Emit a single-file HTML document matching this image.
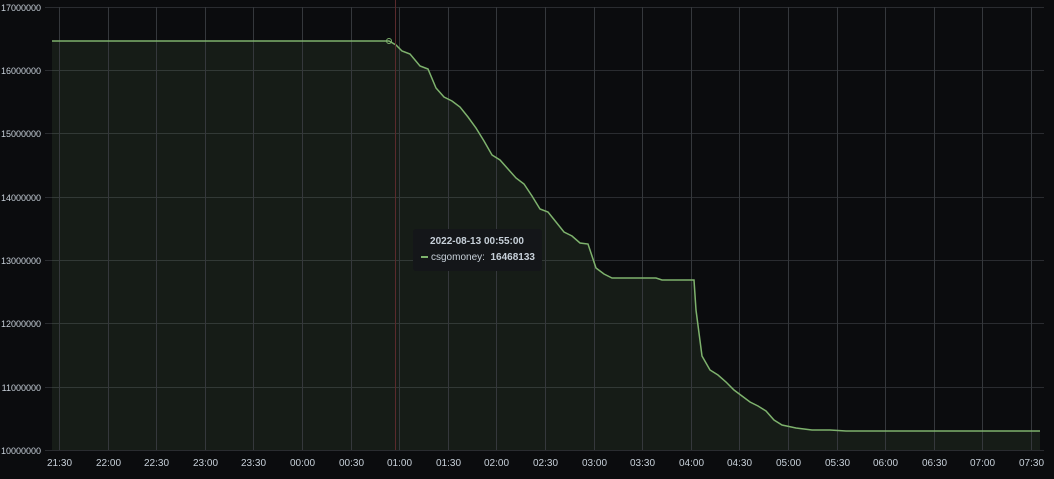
<!DOCTYPE html><html><head><style>
body{margin:0;background:#0b0c0e;width:1054px;height:474px;overflow:hidden;font-family:"Liberation Sans",sans-serif}
svg text{font-family:"Liberation Sans",sans-serif;font-size:10px;fill:#c7d0d9}
svg .yl text{font-size:9px}
</style></head><body>
<svg width="1054" height="474" xmlns="http://www.w3.org/2000/svg">
<g stroke="#2a2c30" stroke-width="1">
<line x1="45" x2="1044" y1="7.5" y2="7.5"/><line x1="45" x2="1044" y1="70.5" y2="70.5"/><line x1="45" x2="1044" y1="133.5" y2="133.5"/><line x1="45" x2="1044" y1="197.5" y2="197.5"/><line x1="45" x2="1044" y1="260.5" y2="260.5"/><line x1="45" x2="1044" y1="323.5" y2="323.5"/><line x1="45" x2="1044" y1="387.5" y2="387.5"/><line x1="45" x2="1044" y1="450.5" y2="450.5"/>
</g>
<path d="M52,41 L389,41 L396,45 L402,51 L410,54 L420,66 L428,69 L436,88 L444,97 L452,101 L460,107 L468,117 L476,128 L484,141 L492,155 L500,160 L508,169 L516,178 L524,184 L532,196 L540,209 L548,212 L556,222 L564,232 L572,236 L580,243 L588,244 L596,268 L604,274 L612,278 L656,278 L662,280 L694,280 L696,310 L702,356 L710,370 L718,375 L726,382 L734,390 L742,396 L750,402 L758,406 L766,411 L774,420 L782,425 L796,428 L812,430 L830,430 L846,431 L1040,431 L1040,450 L52,450 Z" fill="#7eb26d" fill-opacity="0.1"/>
<g id="vg" stroke="#35383c"></g>
<path d="M52,41 L389,41 L396,45 L402,51 L410,54 L420,66 L428,69 L436,88 L444,97 L452,101 L460,107 L468,117 L476,128 L484,141 L492,155 L500,160 L508,169 L516,178 L524,184 L532,196 L540,209 L548,212 L556,222 L564,232 L572,236 L580,243 L588,244 L596,268 L604,274 L612,278 L656,278 L662,280 L694,280 L696,310 L702,356 L710,370 L718,375 L726,382 L734,390 L742,396 L750,402 L758,406 L766,411 L774,420 L782,425 L796,428 L812,430 L830,430 L846,431 L1040,431" fill="none" stroke="#7eb26d" stroke-width="1.5"/>
<line x1="395.5" x2="395.5" y1="0" y2="450" stroke="#5a2a2c" stroke-width="1"/>
<circle cx="389" cy="41" r="2.5" fill="none" stroke="#7eb26d"/>
<g text-anchor="end" class="yl">
<text x="41" y="11">17000000</text><text x="41" y="74">16000000</text><text x="41" y="137">15000000</text><text x="41" y="201">14000000</text><text x="41" y="264">13000000</text><text x="41" y="327">12000000</text><text x="41" y="391">11000000</text><text x="41" y="454">10000000</text>
</g>
<g text-anchor="middle" id="xl"></g>
<rect x="413" y="229" width="129" height="42" rx="3" fill="#141619"/>
<text x="477" y="244" text-anchor="middle" style="font-weight:bold">2022-08-13 00:55:00</text>
<line x1="421" x2="428" y1="257" y2="257" stroke="#7eb26d" stroke-width="2"/>
<text x="431" y="260">csgomoney:</text>
<text x="535" y="260" text-anchor="end" style="font-weight:bold">16468133</text>
</svg>
<script>
var labels=["21:30","22:00","22:30","23:00","23:30","00:00","00:30","01:00","01:30","02:00","02:30","03:00","03:30","04:00","04:30","05:00","05:30","06:00","06:30","07:00","07:30"];
var g=document.getElementById('vg'),xl=document.getElementById('xl'),ns="http://www.w3.org/2000/svg";
labels.forEach(function(l,i){var x=Math.round(59+i*48.6)+0.5;
var ln=document.createElementNS(ns,'line');ln.setAttribute('x1',x);ln.setAttribute('x2',x);ln.setAttribute('y1',7);ln.setAttribute('y2',450);g.appendChild(ln);
var t=document.createElementNS(ns,'text');t.setAttribute('x',x);t.setAttribute('y',466);t.textContent=l;xl.appendChild(t);});
</script>
</body></html>
